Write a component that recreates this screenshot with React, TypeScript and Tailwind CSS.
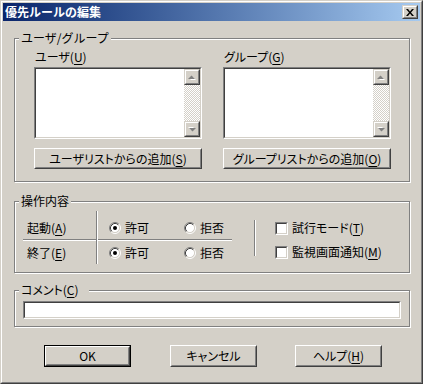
import type { ReactNode } from 'react'

// classic Win2000 dialog bevels
function Raised({ className = '', children }: { className?: string; children?: ReactNode }) {
  return (
    <div className={`border border-t-white border-l-white border-b-[#404040] border-r-[#404040] ${className}`}>
      <div className="h-full w-full border border-t-[#d4d0c8] border-l-[#d4d0c8] border-b-[#808080] border-r-[#808080] flex items-center justify-center">
        {children}
      </div>
    </div>
  )
}

function ScrollBtn({ className = '', children }: { className?: string; children?: ReactNode }) {
  return (
    <div className={`border border-t-[#d4d0c8] border-l-[#d4d0c8] border-b-[#404040] border-r-[#404040] bg-[#d4d0c8] ${className}`}>
      <div className="h-full w-full border border-t-white border-l-white border-b-[#808080] border-r-[#808080] flex items-center justify-center">
        {children}
      </div>
    </div>
  )
}

function Sunken({ className = '', children }: { className?: string; children?: ReactNode }) {
  return (
    <div className={`border border-t-[#808080] border-l-[#808080] border-b-white border-r-white ${className}`}>
      <div className="h-full w-full border border-t-[#404040] border-l-[#404040] border-b-[#d4d0c8] border-r-[#d4d0c8] bg-white flex">
        {children}
      </div>
    </div>
  )
}

function GroupBox({ label, className = '', children }: { label: ReactNode; className?: string; children?: ReactNode }) {
  return (
    <div className={`relative w-[396px] border border-[#808080] shadow-[1px_1px_0_#fff,inset_1px_1px_0_#fff] ${className}`}>
      <span className="absolute left-[4px] -top-[8px] px-[2px] bg-[#d4d0c8] leading-[14px]">{label}</span>
      {children}
    </div>
  )
}

function Key({ c }: { c: string }) {
  return (
    <span>
      (<span className="underline underline-offset-2">{c}</span>)
    </span>
  )
}

function Arrow({ down }: { down?: boolean }) {
  return (
    <svg width="8" height="5" viewBox="0 0 8 5" className={down ? 'rotate-180' : ''}>
      <path d="M4 1L7 4H1z" fill="#fff" transform="translate(1 1)" />
      <path d="M3.5 0.5L7 4H0z" fill="#808080" />
    </svg>
  )
}

function ListBox() {
  return (
    <Sunken className="h-[72px] w-full">
      <div className="flex-1" />
      <div className="w-[16px] flex flex-col">
        <ScrollBtn className="h-[16px]">
          <Arrow />
        </ScrollBtn>
        <div className="flex-1 bg-[repeating-conic-gradient(#fff_0%_25%,#d4d0c8_0%_50%)] bg-[length:2px_2px]" />
        <ScrollBtn className="h-[16px]">
          <Arrow down />
        </ScrollBtn>
      </div>
    </Sunken>
  )
}

function ListColumn({ label, k, button, bk }: { label: string; k: string; button: string; bk: string }) {
  return (
    <div className="w-[168px] flex flex-col">
      <div className="h-[16px] leading-[16px] pl-[1px] mb-[2px]">
        {label}
        <Key c={k} />
      </div>
      <ListBox />
      <Raised className="mt-[9px] h-[21px] w-full">
        <span className="leading-[16px]">
          {button}
          <Key c={bk} />
        </span>
      </Raised>
    </div>
  )
}

function Radio({ checked }: { checked?: boolean }) {
  return (
    <svg width="12" height="12" viewBox="0 0 12 12" className="shrink-0">
      <circle cx="6" cy="6" r="4.5" fill="#fff" />
      <path d="M2.11 9.89A5.5 5.5 0 0 1 9.89 2.11" fill="none" stroke="#808080" />
      <path d="M9.89 2.11A5.5 5.5 0 0 1 2.11 9.89" fill="none" stroke="#fff" />
      <path d="M2.82 9.18A4.5 4.5 0 0 1 9.18 2.82" fill="none" stroke="#404040" />
      <path d="M9.18 2.82A4.5 4.5 0 0 1 2.82 9.18" fill="none" stroke="#d4d0c8" />
      {checked && <circle cx="6" cy="6" r="2" fill="#000" />}
    </svg>
  )
}

function RadioPair() {
  return (
    <div className="flex pl-[11px]">
      <div className="w-[75px] flex items-center gap-[4px]">
        <Radio checked />
        <span className="leading-[16px]">許可</span>
      </div>
      <div className="flex items-center gap-[4px]">
        <Radio />
        <span className="leading-[16px]">拒否</span>
      </div>
    </div>
  )
}

function Check({ children }: { children: ReactNode }) {
  return (
    <div className="h-[24px] flex items-center gap-[4px]">
      <Sunken className="w-[13px] h-[13px]" />
      <span className="leading-[16px]">{children}</span>
    </div>
  )
}

export default function App() {
  return (
    <div className="w-[423px] h-[384px] border border-t-[#d4d0c8] border-l-[#d4d0c8] border-b-[#404040] border-r-[#404040] font-['Noto_Sans_CJK_JP',sans-serif] [font-feature-settings:'palt'] text-[12px] text-black">
      <div className="h-full border border-t-white border-l-white border-b-[#808080] border-r-[#808080] bg-[#d4d0c8] p-[1px] flex flex-col">
        <div className="h-[18px] flex items-center bg-gradient-to-r from-[#0a246a] to-[#a6caf0]">
          <span className="flex-1 pl-[2px] text-white font-bold leading-[18px] [font-feature-settings:normal]">優先ルールの編集</span>
          <ScrollBtn className="w-[16px] h-[14px] mr-[2px]">
            <svg width="8" height="7" viewBox="0 0 8 7">
              <path d="M0 0h2l2 2.4L6 0h2L5 3.5 8 7H6L4 4.6 2 7H0l3-3.5z" fill="#000" />
            </svg>
          </ScrollBtn>
        </div>

        <div className="flex-1 pl-[11px]">
          <GroupBox
            label={<span className="[font-feature-settings:normal]">ユーザ/グループ</span>}
            className="mt-[17px] h-[144px]"
          >
            <div className="flex gap-[21px] pl-[19px] pt-[10px]">
              <ListColumn label="ユーザ" k="U" button="ユーザリストからの追加" bk="S" />
              <ListColumn label="グループ" k="G" button="グループリストからの追加" bk="O" />
            </div>
          </GroupBox>

          <GroupBox label="操作内容" className="mt-[19px] h-[72px]">
            <div className="flex pl-[8px] pt-[9px]">
              <div className="grid grid-cols-[73px_2px_134px] grid-rows-[28px_2px_23px]">
                <div className="pl-[4px] pt-[9px] leading-[16px]">
                  起動<Key c="A" />
                </div>
                <div className="row-span-3 border-l border-l-[#808080] border-r border-r-white" />
                <div className="pt-[9px]">
                  <RadioPair />
                </div>
                <div className="border-t border-t-[#808080] border-b border-b-white" />
                <div className="border-t border-t-[#808080] border-b border-b-white" />
                <div className="pl-[4px] pt-[4px] leading-[16px]">
                  終了<Key c="E" />
                </div>
                <div className="pt-[4px]">
                  <RadioPair />
                </div>
              </div>
              <div className="ml-[22px] mt-[9px] h-[36px] w-[2px] border-l border-l-[#808080] border-r border-r-white" />
              <div className="ml-[19px] mt-[5px] flex flex-col">
                <Check>
                  試行モード<Key c="T" />
                </Check>
                <Check>
                  監視画面通知<Key c="M" />
                </Check>
              </div>
            </div>
          </GroupBox>

          <GroupBox
            label={
              <span className="pr-[8px]">
                コメント<Key c="C" />
              </span>
            }
            className="mt-[17px] h-[37px]"
          >
            <div className="pl-[8px] pt-[10px]">
              <Sunken className="w-[378px] h-[18px]" />
            </div>
          </GroupBox>

          <div className="mt-[18px] flex">
            <div className="ml-[30px] w-[87px] h-[22px] border border-black">
              <Raised className="h-full w-full">
                <span className="leading-[16px]">OK</span>
              </Raised>
            </div>
            <Raised className="ml-[39px] w-[87px] h-[22px]">
              <span className="leading-[16px]">キャンセル</span>
            </Raised>
            <Raised className="ml-[38px] w-[87px] h-[22px]">
              <span className="leading-[16px]">
                ヘルプ<Key c="H" />
              </span>
            </Raised>
          </div>
        </div>
      </div>
    </div>
  )
}
